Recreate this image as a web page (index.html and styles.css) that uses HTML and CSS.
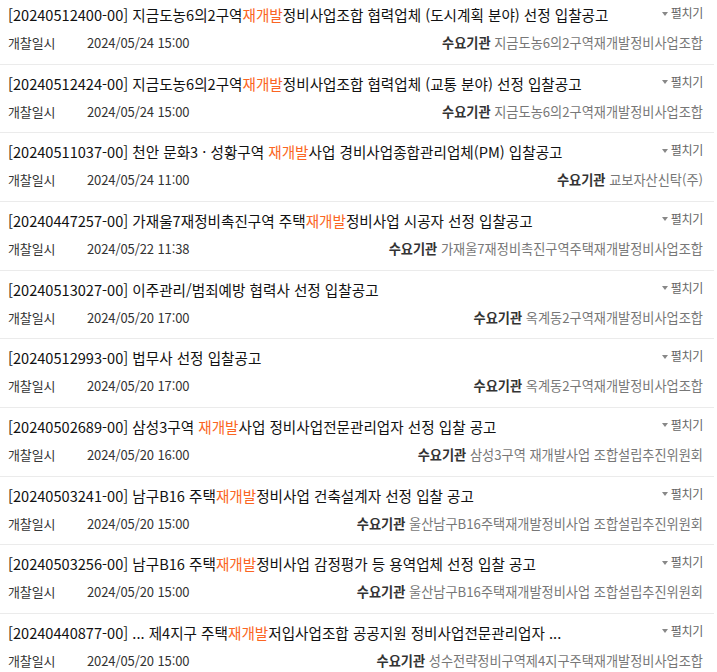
FILE: index.html
```html
<!DOCTYPE html>
<html lang="ko">
<head>
<meta charset="utf-8">
<title>입찰공고 목록</title>
<link rel="stylesheet" href="styles.css">
</head>
<body>
<ul class="list">
  <li class="item">
    <div class="top"><p class="title">[20240512400-00] 지금도농6의2구역<em>재개발</em>정비사업조합 협력업체 (도시계획 분야) 선정 입찰공고</p><span class="toggle"><i class="tri"></i>펼치기</span></div>
    <div class="meta"><span class="date"><b class="lbl">개찰일시</b>2024/05/24 15:00</span><span class="org"><b>수요기관</b> 지금도농6의2구역재개발정비사업조합</span></div>
  </li>
  <li class="item">
    <div class="top"><p class="title">[20240512424-00] 지금도농6의2구역<em>재개발</em>정비사업조합 협력업체 (교통 분야) 선정 입찰공고</p><span class="toggle"><i class="tri"></i>펼치기</span></div>
    <div class="meta"><span class="date"><b class="lbl">개찰일시</b>2024/05/24 15:00</span><span class="org"><b>수요기관</b> 지금도농6의2구역재개발정비사업조합</span></div>
  </li>
  <li class="item">
    <div class="top"><p class="title">[20240511037-00] 천안 문화3 · 성황구역 <em>재개발</em>사업 경비사업종합관리업체(PM) 입찰공고</p><span class="toggle"><i class="tri"></i>펼치기</span></div>
    <div class="meta"><span class="date"><b class="lbl">개찰일시</b>2024/05/24 11:00</span><span class="org"><b>수요기관</b> 교보자산신탁(주)</span></div>
  </li>
  <li class="item">
    <div class="top"><p class="title">[20240447257-00] 가재울7재정비촉진구역 주택<em>재개발</em>정비사업 시공자 선정 입찰공고</p><span class="toggle"><i class="tri"></i>펼치기</span></div>
    <div class="meta"><span class="date"><b class="lbl">개찰일시</b>2024/05/22 11:38</span><span class="org"><b>수요기관</b> 가재울7재정비촉진구역주택재개발정비사업조합</span></div>
  </li>
  <li class="item">
    <div class="top"><p class="title">[20240513027-00] 이주관리/범죄예방 협력사 선정 입찰공고</p><span class="toggle"><i class="tri"></i>펼치기</span></div>
    <div class="meta"><span class="date"><b class="lbl">개찰일시</b>2024/05/20 17:00</span><span class="org"><b>수요기관</b> 옥계동2구역재개발정비사업조합</span></div>
  </li>
  <li class="item">
    <div class="top"><p class="title">[20240512993-00] 법무사 선정 입찰공고</p><span class="toggle"><i class="tri"></i>펼치기</span></div>
    <div class="meta"><span class="date"><b class="lbl">개찰일시</b>2024/05/20 17:00</span><span class="org"><b>수요기관</b> 옥계동2구역재개발정비사업조합</span></div>
  </li>
  <li class="item">
    <div class="top"><p class="title">[20240502689-00] 삼성3구역 <em>재개발</em>사업 정비사업전문관리업자 선정 입찰 공고</p><span class="toggle"><i class="tri"></i>펼치기</span></div>
    <div class="meta"><span class="date"><b class="lbl">개찰일시</b>2024/05/20 16:00</span><span class="org"><b>수요기관</b> 삼성3구역 재개발사업 조합설립추진위원회</span></div>
  </li>
  <li class="item">
    <div class="top"><p class="title">[20240503241-00] 남구B16 주택<em>재개발</em>정비사업 건축설계자 선정 입찰 공고</p><span class="toggle"><i class="tri"></i>펼치기</span></div>
    <div class="meta"><span class="date"><b class="lbl">개찰일시</b>2024/05/20 15:00</span><span class="org"><b>수요기관</b> 울산남구B16주택재개발정비사업 조합설립추진위원회</span></div>
  </li>
  <li class="item">
    <div class="top"><p class="title">[20240503256-00] 남구B16 주택<em>재개발</em>정비사업 감정평가 등 용역업체 선정 입찰 공고</p><span class="toggle"><i class="tri"></i>펼치기</span></div>
    <div class="meta"><span class="date"><b class="lbl">개찰일시</b>2024/05/20 15:00</span><span class="org"><b>수요기관</b> 울산남구B16주택재개발정비사업 조합설립추진위원회</span></div>
  </li>
  <li class="item">
    <div class="top"><p class="title">[20240440877-00] ... 제4지구 주택<em>재개발</em>저입사업조합 공공지원 정비사업전문관리업자 ...</p><span class="toggle"><i class="tri"></i>펼치기</span></div>
    <div class="meta"><span class="date"><b class="lbl">개찰일시</b>2024/05/20 15:00</span><span class="org"><b>수요기관</b> 성수전략정비구역제4지구주택재개발정비사업조합</span></div>
  </li>
</ul>
</body>
</html>
```
FILE: styles.css
```css
html, body {
  margin: 0;
  padding: 0;
  background: #fff;
}
body {
  font-family: "Noto Sans CJK KR", "Noto Sans", sans-serif;
  color: #222;
  overflow: hidden;
}
.list {
  list-style: none;
  margin: -4px 0 0 0;
  padding: 0;
  width: 714px;
}
.item {
  height: 67.67px;
  box-sizing: content-box;
  border-bottom: 1.5px solid #ebebeb;
  padding: 0 11px 0 8px;
}
.top {
  display: flex;
  align-items: flex-start;
  justify-content: space-between;
  padding-top: 8px;
}
.title {
  margin: 0;
  font-size: 14.6px;
  line-height: 22px;
  color: #111;
  white-space: nowrap;
}
.title em {
  font-style: normal;
  color: #fb6522;
}
.toggle {
  display: flex;
  align-items: center;
  font-size: 12px;
  line-height: 16px;
  color: #666;
  margin-top: 1px;
  letter-spacing: -0.3px;
}
.tri {
  width: 0;
  height: 0;
  border-left: 3.5px solid transparent;
  border-right: 3.5px solid transparent;
  border-top: 4px solid #888;
  margin-right: 3px;
  margin-top: 1px;
}
.meta {
  display: flex;
  justify-content: space-between;
  align-items: center;
  margin-top: 7px;
  font-size: 13px;
  line-height: 20px;
}
.date {
  color: #333;
  letter-spacing: -0.1px;
}
.lbl {
  display: inline-block;
  width: 79px;
  font-weight: normal;
  color: #333;
}
.org {
  color: #777;
  font-size: 13.2px;
}
.org b {
  color: #333;
  font-weight: bold;
}
```
